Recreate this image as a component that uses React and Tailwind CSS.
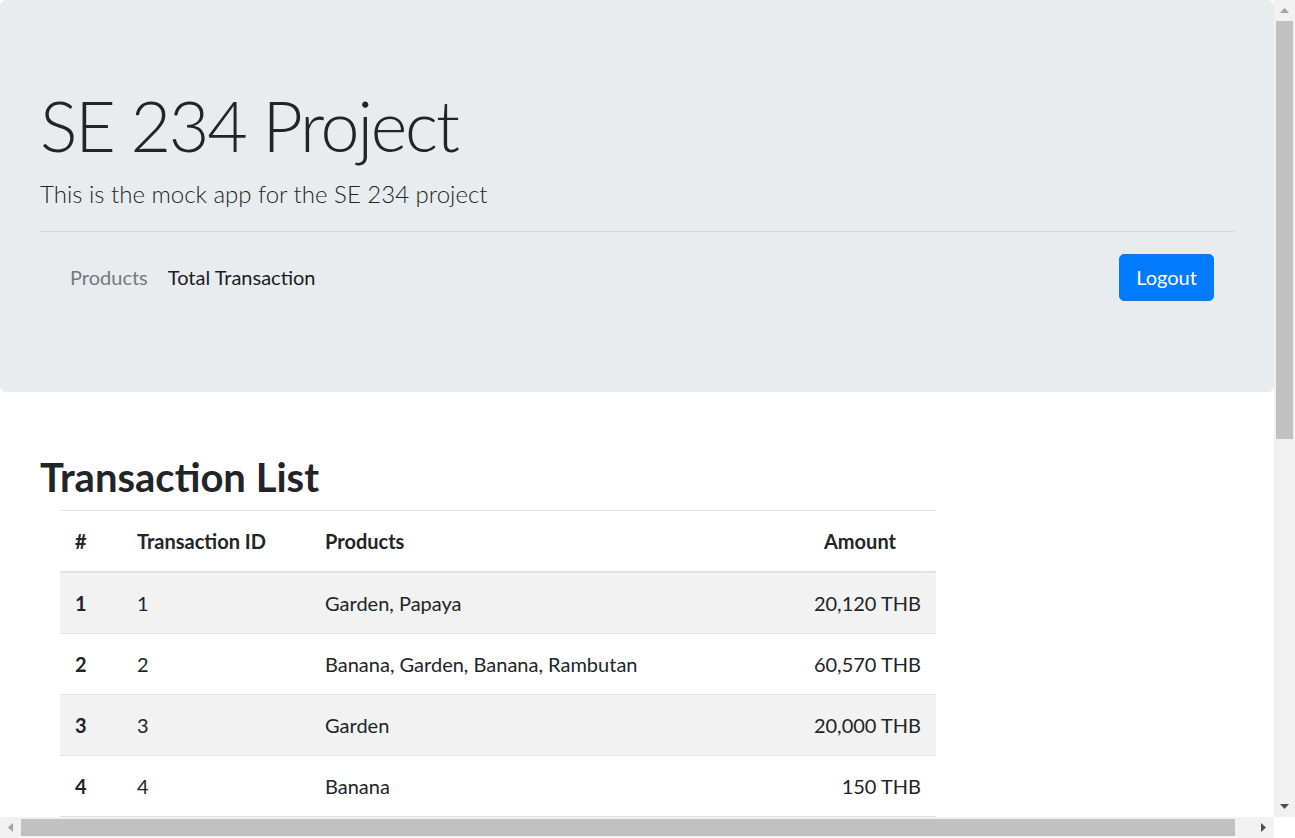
const transactions = [
  { id: 1, products: 'Garden, Papaya', amount: '20,120 THB' },
  { id: 2, products: 'Banana, Garden, Banana, Rambutan', amount: '60,570 THB' },
  { id: 3, products: 'Garden', amount: '20,000 THB' },
  { id: 4, products: 'Banana', amount: '150 THB' },
];

function Arrow({ dir, className }) {
  const points = {
    up: '0,5 4.5,0 9,5',
    down: '0,0 9,0 4.5,5',
    left: '5,0 5,9 0,4.5',
    right: '0,0 5,4.5 0,9',
  }[dir];
  const vertical = dir === 'up' || dir === 'down';
  return (
    <svg
      width={vertical ? 9 : 5}
      height={vertical ? 5 : 9}
      viewBox={vertical ? '0 0 9 5' : '0 0 5 9'}
      className={className}
    >
      <polygon points={points} fill="currentColor" />
    </svg>
  );
}

function Header() {
  return (
    <div className="bg-[#e9ecef] rounded-[6px] px-[40px] pt-[80px] pb-[80px]">
      <h1 className="text-[70px] leading-[90px] h-[90px] font-light tracking-[-2.2px] text-[#212529]">
        SE 234 Project
      </h1>
      <p className="mt-[6px] text-[24px] leading-[36px] font-light text-[#212529]">
        This is the mock app for the SE 234 project
      </p>
      <hr className="mt-[19px] mb-[10px] border-0 border-t border-[#d2d4d7]" />
      <nav className="flex items-center justify-between px-[20px] py-[10px]">
        <div className="flex items-center text-[20px] leading-[30px]">
          <a className="px-[10px] py-[10px] text-[#76787a]">Products</a>
          <a className="px-[10px] py-[10px] text-[#1b1c1d]">Total Transaction</a>
        </div>
        <button className="w-[95px] h-[47px] rounded-[5px] bg-[#007bff] border border-[#007bff] text-white text-[20px] leading-[30px]">
          Logout
        </button>
      </nav>
    </div>
  );
}

function TransactionTable() {
  return (
    <table className="ml-[20px] w-[876px] table-fixed border-collapse text-[20px] leading-[30px] text-[#212529]">
      <colgroup>
        <col className="w-[62px]" />
        <col className="w-[188px]" />
        <col className="w-[499px]" />
        <col className="w-[127px]" />
      </colgroup>
      <thead>
        <tr className="border-t border-[#e4e7ea] border-b-2 border-b-[#dee2e6]">
          <th className="p-[15px] text-left font-bold">#</th>
          <th className="p-[15px] text-left font-bold whitespace-nowrap">Transaction ID</th>
          <th className="p-[15px] text-left font-bold">Products</th>
          <th className="p-[15px] text-left font-bold">Amount</th>
        </tr>
      </thead>
      <tbody>
        {transactions.map((t, i) => (
          <tr
            key={t.id}
            className={`border-b border-[#dee2e6] ${i % 2 === 0 ? 'bg-[#f2f2f2]' : 'bg-white'}`}
          >
            <td className="p-[15px] font-bold">{i + 1}</td>
            <td className="p-[15px]">{t.id}</td>
            <td className="p-[15px] whitespace-nowrap">{t.products}</td>
            <td className="py-[15px] pl-0 pr-[15px] text-right whitespace-nowrap">{t.amount}</td>
          </tr>
        ))}
      </tbody>
    </table>
  );
}

export default function App() {
  return (
    <div
      className="w-[1295px] h-[838px] flex flex-col overflow-hidden bg-white"
      style={{ fontFamily: 'Lato, "Noto Sans", sans-serif' }}
    >
      <div className="flex flex-1 min-h-0">
        {/* page */}
        <div className="w-[1274px] overflow-hidden">
          <Header />
          <div className="pl-[40px] pt-[61px]">
            <h2 className="text-[40px] leading-[48px] font-bold text-[#212529] mb-[9px]">
              Transaction List
            </h2>
            <TransactionTable />
          </div>
        </div>

        {/* vertical scrollbar */}
        <div className="w-[21px] bg-[#f1f1f1] flex flex-col">
          <div className="h-[21px] flex items-center justify-center">
            <Arrow dir="up" className="text-[#a3a3a3]" />
          </div>
          <div className="flex-1 px-[2px]">
            <div className="h-[418px] bg-[#c1c1c1]" />
          </div>
          <div className="h-[21px] flex items-center justify-center">
            <Arrow dir="down" className="text-[#505050]" />
          </div>
        </div>
      </div>

      {/* horizontal scrollbar */}
      <div className="h-[21px] flex">
        <div className="w-[1274px] bg-[#f1f1f1] flex">
          <div className="w-[21px] flex items-center justify-center">
            <Arrow dir="left" className="text-[#a3a3a3]" />
          </div>
          <div className="flex-1 py-[2px]">
            <div className="w-[1214px] h-full bg-[#c1c1c1]" />
          </div>
          <div className="w-[21px] flex items-center justify-center">
            <Arrow dir="right" className="text-[#505050]" />
          </div>
        </div>
        <div className="w-[21px] bg-white" />
      </div>
    </div>
  );
}
